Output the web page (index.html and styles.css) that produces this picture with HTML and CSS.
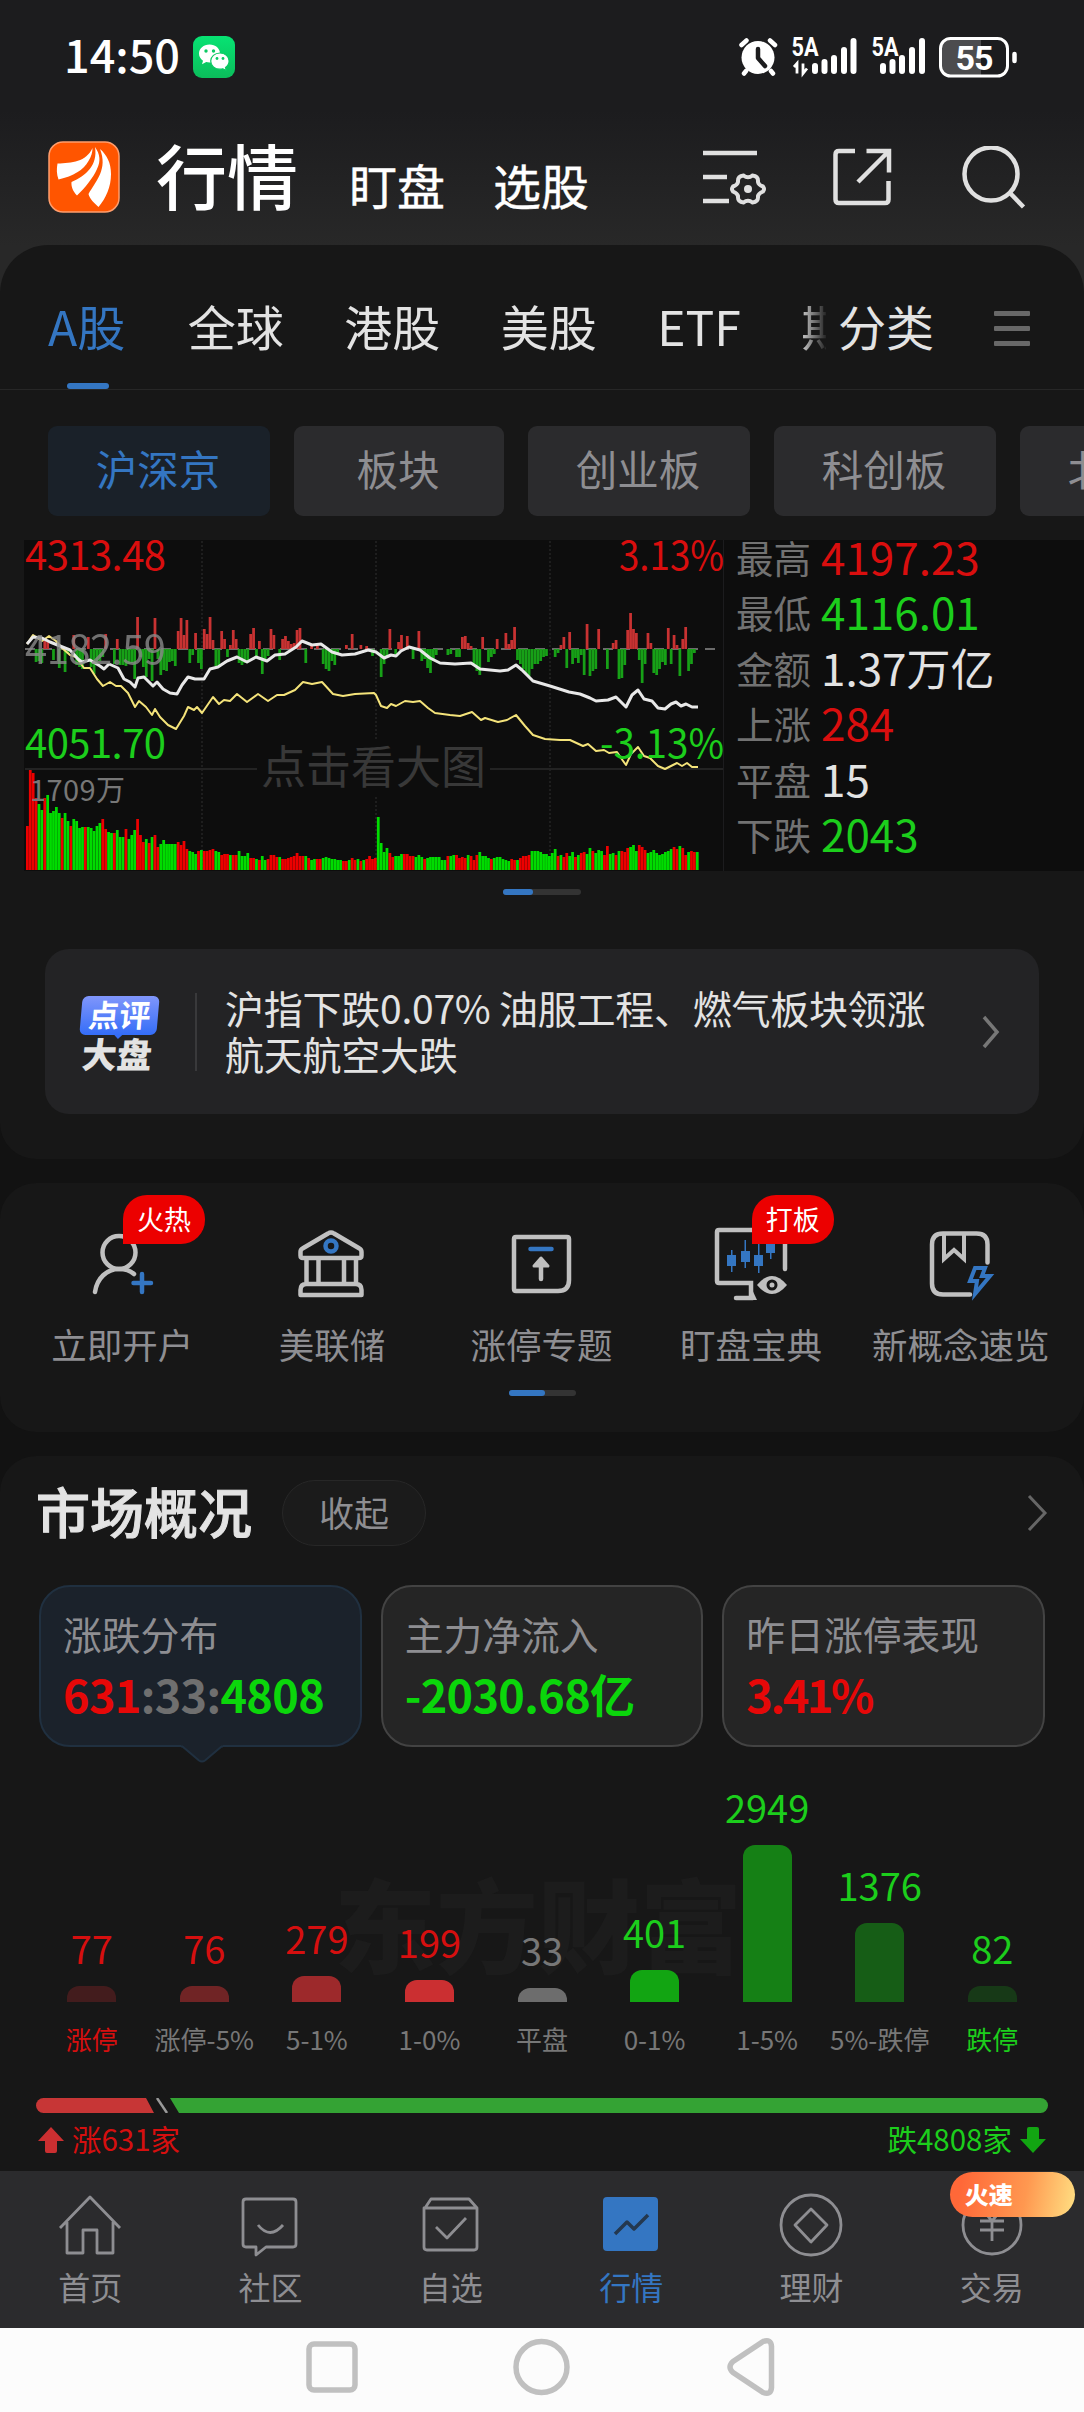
FILE: index.html
```html
<!DOCTYPE html>
<html lang="zh-CN">
<head>
<meta charset="utf-8">
<title>行情</title>
<link rel="stylesheet" href="styles.css">
</head>
<body>
<div class="top">
  <div class="status">
    <span class="clock">14:50</span>
    <svg class="wechat" width="42" height="42" viewBox="0 0 42 42">
      <defs><linearGradient id="wx" x2="0" y2="1"><stop offset="0" stop-color="#07e373"/><stop offset="1" stop-color="#0bbd5b"/></linearGradient></defs>
      <rect width="42" height="42" rx="9" fill="url(#wx)"/>
      <path d="M16.5 8.5C10.500 8.500 6 12.500 6 17.500c0 3 1.500 5.500 4 7.200L9 28.200l4.200-2.200c1.100.3 2.200.4 3.300.4 6 0 10.500-4 10.500-9S22.500 8.500 16.500 8.500z" fill="#fff"/>
      <path d="M27 17c-5.300 0-9.300 3.600-9.300 8.100s4 8.100 9.300 8.100c1 0 2-.1 2.900-.4l3.500 1.700-.9-3c2.200-1.500 3.600-3.800 3.600-6.400 0-4.500-3.800-8.100-9.100-8.100z" fill="#fff" stroke="#0cc963" stroke-width="1.200"/>
      <g fill="#0cc963"><circle cx="13" cy="15" r="1.700"/><circle cx="20.500" cy="15" r="1.700"/><circle cx="24" cy="22.500" r="1.400"/><circle cx="30" cy="22.500" r="1.400"/></g>
    </svg>
    <svg class="signals" width="280" height="42" viewBox="738 36 280 42">
      <g fill="none" stroke="#fff" stroke-width="4.500" stroke-linecap="round">
        <path d="M741.500 45l5-4.500M775 45l-5-4.500M746 71l-2 2.500M771 71l2 2.500"/>
      </g>
      <circle cx="758" cy="57.500" r="16.500" fill="#fff"/>
      <path d="M758 49v9l7 8" fill="none" stroke="#1c1c1e" stroke-width="4.500" stroke-linecap="round" stroke-linejoin="round"/>
      <g fill="#fff" class="net"><text x="791.500" y="55.500" textLength="27" lengthAdjust="spacingAndGlyphs">5A</text><text x="871.500" y="55.500" textLength="27" lengthAdjust="spacingAndGlyphs">5A</text></g>
      <path d="M794 67l3-3.500V73.500M803 63.500V73.500l4-5" fill="none" stroke="#fff" stroke-width="2.800"/>
      <g stroke="#fff" stroke-width="6" stroke-linecap="round">
        <path d="M815 66v5M824.500 62v9M834 58v13M844 50v21M853.500 41v30M883 66v5M892.500 62v9M902 58v13M912 50v21M922 41v30"/>
      </g>
      <path d="M951 39h30v37h-30q-10 0-10-11V50q0-11 10-11z" fill="#4c4c4e"/>
      <rect x="940.500" y="38.500" width="67" height="37.500" rx="10" fill="none" stroke="#fff" stroke-width="3"/>
      <path d="M1014.500 54v7" stroke="#fff" stroke-width="4.500" stroke-linecap="round"/>
      <text class="batt" x="955.500" y="69.500" textLength="38">55</text>
    </svg>
  </div>
  <div class="header">
    <svg class="logo" width="72" height="72" viewBox="0 0 72 72">
      <rect x="1" y="1" width="70" height="70" rx="14" fill="#ff5500" stroke="#ff9d6c" stroke-width="1.500"/>
      <path d="M44.500 7c0 4-1 8-4 13-5 9-15 15-30 18.500-2-5-2-11-1-16C24 22 38 21 44.500 7z" fill="#fff"/>
      <path d="M47 6c5 7 6 14 2 22-4 9-12 19-20 26.500-4-4-6-9-5.500-13.500C38 35 50 24 47 6z" fill="#fff"/>
      <path d="M52 8c7 6 11 14 11 25 0 13-5 24-12.500 33-4-4-9-8-10-13C48 40 60 28 52 8z" fill="#fff"/>
    </svg>
    <h1 class="title">行情</h1>
    <span class="subtitle">盯盘</span>
    <span class="subtitle">选股</span>
    <svg class="tools" width="326" height="64" viewBox="702 146 326 64" fill="none" stroke="#e0e0e0" stroke-width="4.500">
      <path d="M703 153h54M703 177h24M703 201h26"/>
      <path d="M743.500 175.500q4.500 3.500 9 0q6 .5 5.500 6.500q.500 3 5 4.500q2 2.500 0 5q-4.500 2-5 4.500q.500 6-5.500 6.500q-4.500-3.500-9 0q-6-.5-5.500-6.500q-.500-2.500-5-4.500q-2-2.500 0-5q4.500-1.500 5-4.500q-.500-6 5.500-6.500z" stroke-width="4"/>
      <circle cx="748" cy="189" r="4" fill="#e0e0e0" stroke="none"/>
      <path d="M855 151h-16q-3.500 0-3.500 3.500v45q0 3.500 3.500 3.500h46q3.500 0 3.500-3.500V181M866.500 151h22.500v21.500M889 151l-31 31"/>
      <circle cx="991" cy="174" r="26.500"/><path d="M1010 193l13.500 14"/>
    </svg>
  </div>
</div>

<section class="panel first">
  <div class="tabs">
    <div class="tab-scroll">
      <span class="tab active">A股</span><span class="tab">全球</span><span class="tab">港股</span><span class="tab">美股</span><span class="tab">ETF</span><span class="tab">期</span>
    </div>
    <span class="tab classify">分类</span>
    <span class="burger"><i></i><i></i><i></i></span>
  </div>
  <div class="chips">
    <span class="chip on">沪深京</span><span class="chip short">板块</span><span class="chip">创业板</span><span class="chip">科创板</span><span class="chip">北交所</span>
  </div>
  <div class="quote">
    <svg id="chart" width="700" height="331" viewBox="24 540 700 331">
      <g stroke="#252525" stroke-width="1.500" stroke-dasharray="2 2"><path d="M202 541V870M376 541V870M550 541V870"/></g>
      <path d="M25 769H723" stroke="#232323" stroke-width="2"/>
      <path d="M723.500 540V871" stroke="#1c1c1e"/>
      <g id="volume"></g>
      <path d="M25 649H716" stroke="#8b8b8b" stroke-width="1.500" stroke-dasharray="10 7"/>
      <g id="flow"></g>
      <rect x="257" y="740" width="233" height="56" fill="#0d0d0d"/>
      <text class="hint" x="261" y="784" textLength="225">点击看大图</text>
      <polyline fill="none" stroke="#f4e37a" stroke-width="2" stroke-linejoin="round" points="27,644 33,635 42,641 49,636 56,641 62,648 70,655 76,657 84,668 90,668 97,679 103,686 110,682 116,686 121,686 128,693 135,707 139,701 146,707 152,715 155,709 160,717 168,725 176,729 184,716 188,707 194,710 197,707 202,713 213,697 219,704 224,700 230,701 237,694 247,702 258,694 268,701 277,695 284,695 295,690 303,682 312,684 322,682 333,694 343,696 355,694 374,693 376,695 381,706 387,708 391,704 396,706 405,701 413,702 420,701 428,708 435,713 450,715 460,716 472,712 481,720 485,718 498,722 507,720 516,715 525,726 533,735 545,739 560,740 570,740 583,746 588,744 596,751 604,750 609,753 617,752 621,758 626,765 631,754 638,747 644,756 650,758 658,766 665,769 677,763 682,766 687,763 692,767 698,767"/>
      <polyline fill="none" stroke="#e8e8e8" stroke-width="3" stroke-linejoin="round" points="27,644 33,637 42,638 50,642 60,646 70,650 78,659 82,662 90,660 100,666 104,669 109,664 118,668 124,679 130,682 135,687 138,678 144,677 150,683 153,686 157,682 163,689 170,693 177,694 182,685 188,677 195,679 204,679 210,669 218,667 227,661 237,657 247,662 256,657 267,661 275,655 285,654 296,647 302,641 312,645 321,644 332,652 342,655 355,654 368,650 376,652 384,658 391,655 396,656 401,651 409,647 420,650 430,658 440,663 455,664 471,663 480,669 500,671 508,670 516,665 522,670 533,681 550,686 569,692 580,694 590,698 596,701 608,700 616,697 626,707 632,695 638,690 644,699 652,701 658,708 665,709 671,704 676,702 681,706 686,704 692,707 698,707"/>
      <g class="axis">
        <text x="25" y="570" textLength="141" fill="#d90e0e">4313.48</text>
        <text x="25" y="664" textLength="141" fill="#8a8a8a" opacity=".8">4182.59</text>
        <text x="25" y="758" textLength="141" fill="#1cce1c">4051.70</text>
        <text x="619" y="570" textLength="105" lengthAdjust="spacingAndGlyphs" fill="#d90e0e">3.13%</text>
        <text x="600" y="758" textLength="124" lengthAdjust="spacingAndGlyphs" fill="#1cce1c">-3.13%</text>
        <text class="small" x="30" y="801" textLength="95" fill="#777">1709万</text>
      </g>
    </svg>
    <dl class="stats">
      <dt>最高</dt><dd class="up">4197.23</dd>
      <dt>最低</dt><dd class="down">4116.01</dd>
      <dt>金额</dt><dd>1.37万亿</dd>
      <dt>上涨</dt><dd class="up">284</dd>
      <dt>平盘</dt><dd>15</dd>
      <dt>下跌</dt><dd class="down">2043</dd>
    </dl>
  </div>
  <div class="pager wide"><i></i></div>
  <div class="news">
    <div class="news-tag"><b class="review">点评</b><b class="market">大盘</b></div>
    <p>沪指下跌0.07% 油服工程、燃气板块领涨<br>航天航空大跌</p>
    <svg width="20" height="36" viewBox="0 0 20 36"><path d="M3 3l13 15L3 33" fill="none" stroke="#777" stroke-width="3.500"/></svg>
  </div>
</section>

<section class="panel quick">
  <div class="shortcuts">
    <div class="shortcut">
      <svg width="80" height="76" viewBox="82 1226 80 76" fill="none" stroke="#c0c0c0" stroke-width="4.500" stroke-linecap="round"><circle cx="119" cy="1252.500" r="16.500"/><path d="M95 1292c2-14 12-23 24-23 6 0 11 1.500 15 5"/><path d="M142 1274v18M133.500 1283h17.500" stroke="#3476c2"/></svg>
      <span>立即开户</span><em>火热</em>
    </div>
    <div class="shortcut">
      <svg width="80" height="76" viewBox="292 1226 80 76" fill="none" stroke="#c0c0c0" stroke-width="4.500" stroke-linejoin="round"><path d="M329 1233.500q3-2 6 0l25.500 15q2 1 2 3.500v3.500q0 2.500-2.500 2.500h-56q-2.500 0-2.500-2.500V1252q0-2.500 2-3.500zM307.500 1258v26M319.500 1258v26M345 1258v26M357 1258v26M301.500 1295v-5q0-6 6-6h49q6 0 6 6v5z"/><circle cx="332" cy="1246" r="5.500" stroke="#3476c2"/></svg>
      <span>美联储</span>
    </div>
    <div class="shortcut">
      <svg width="80" height="76" viewBox="502 1226 80 76" fill="none" stroke="#c0c0c0" stroke-width="4.500" stroke-linecap="round" stroke-linejoin="round"><path d="M517 1237h51q2 0 2 2v41q0 11-11 11h-42q-2 0-2-2v-50q0-2 2-2z"/><path d="M531.500 1249h21" stroke="#3476c2"/><path d="M542 1279v-19"/><path d="M535 1266l7-8 7 8z" fill="#c0c0c0" stroke-width="3"/></svg>
      <span>涨停专题</span>
    </div>
    <div class="shortcut">
      <svg width="80" height="76" viewBox="711 1226 80 76"><path d="M785 1269v-37q0-2-2-2h-64q-2 0-2 2v49q0 2 2 2h32v15h-15" fill="none" stroke="#c0c0c0" stroke-width="4.500" stroke-linecap="round"/><path d="M749 1283l8 17h-8z" fill="#c0c0c0"/><path d="M757 1285q15-18 30 0q-15 18-30 0z" fill="#c0c0c0"/><circle cx="772" cy="1285" r="4" fill="#c0c0c0" stroke="#171717" stroke-width="3"/><g fill="#3476c2"><path d="M727 1255h9v11h-9zM741 1251h9v11h-9zM754 1255h9v11h-9zM766 1242h9v11h-9z"/><path d="M731 1250h1.500v22H731zM744.500 1240h1.500v28h-1.500zM758 1243h1.500v30H758zM770 1236h1.500v23H770z"/></g></svg>
      <span>盯盘宝典</span><em>打板</em>
    </div>
    <div class="shortcut">
      <svg width="80" height="76" viewBox="921 1226 80 76" fill="none" stroke="#c0c0c0" stroke-width="4.500" stroke-linecap="round"><path d="M971 1294.500h-27q-11 0-11-11v-39q0-11 11-11h33.500q11 0 11 11v18"/><path d="M945 1234v25l10-9 10 9v-25" stroke-width="4"/><path d="M976 1268h10l-3 8h8l-15 18 2-13h-7z" stroke="#3476c2" stroke-width="4"/></svg>
      <span>新概念速览</span>
    </div>
  </div>
  <div class="pager"><i></i></div>
</section>

<section class="panel market-panel">
  <div class="section-head">
    <h2>市场概况</h2><span class="pill">收起</span>
    <svg width="24" height="40" viewBox="0 0 24 40"><path d="M3 3l16 17L3 37" fill="none" stroke="#666" stroke-width="3"/></svg>
  </div>
  <div class="cards">
    <div class="card selected"><span>涨跌分布</span><b><i class="r">631</i><i class="n">:33:</i><i class="g">4808</i></b>
      <svg class="pointer" width="42" height="18" viewBox="0 0 42 18"><path d="M0 0h42v2h-1L24 16q-3 2-6 0L1 2H0z" fill="#1b222b"/><path d="M0 1.500h1.500L18 15.500q3 2 6 0L40.500 1.500H42" fill="none" stroke="#203040" stroke-width="2"/></svg>
    </div>
    <div class="card"><span>主力净流入</span><b class="g">-2030.68亿</b></div>
    <div class="card"><span>昨日涨停表现</span><b class="r rate">3.41%</b></div>
  </div>
  <div class="dist">
    <div class="watermark">东方财富</div>
    <div class="col red"><b>77</b><i style="height:16px;background:#431c1d"></i><span>涨停</span></div>
    <div class="col red"><b>76</b><i style="height:16px;background:#702425"></i><span class="dim">涨停-5%</span></div>
    <div class="col red"><b>279</b><i style="height:26px;background:#9d292b"></i><span class="dim">5-1%</span></div>
    <div class="col red"><b>199</b><i style="height:22px;background:#cb2f31"></i><span class="dim">1-0%</span></div>
    <div class="col flat"><b>33</b><i style="height:14px;background:#6d6d6d"></i><span class="dim">平盘</span></div>
    <div class="col green"><b>401</b><i style="height:32px;background:#12a512"></i><span class="dim">0-1%</span></div>
    <div class="col green"><b>2949</b><i style="height:157px;background:#158015"></i><span class="dim">1-5%</span></div>
    <div class="col green"><b>1376</b><i style="height:79px;background:#165d16"></i><span class="dim">5%-跌停</span></div>
    <div class="col green"><b>82</b><i style="height:16px;background:#173917"></i><span>跌停</span></div>
  </div>
  <svg class="ratio" width="1012" height="15" viewBox="0 0 1012 15">
    <path d="M7.500 0H110l8 15H7.500a7.500 7.500 0 010-15z" fill="#c73636"/><path d="M121 0l10 15" stroke="#999" stroke-width="2.500"/><path d="M134 0h870.500a7.500 7.500 0 010 15H143z" fill="#34a334"/>
  </svg>
  <div class="totals">
    <svg width="26" height="26" viewBox="0 0 26 26"><path d="M13 0l13 14h-7v10q0 2-2 2H9q-2 0-2-2V14H0z" fill="#cb2f31"/></svg><span class="r">涨631家</span>
    <span class="g push">跌4808家</span><svg width="26" height="26" viewBox="0 0 26 26"><path d="M13 26L0 12h7V2q0-2 2-2h8q2 0 2 2v10h7z" fill="#12a512"/></svg>
  </div>
</section>

<nav class="nav">
  <a><svg viewBox="0 0 66 66"><path d="M3 36L33 5l30 31M10 30v31h16V38h14v23h16V30"/></svg><span>首页</span></a>
  <a><svg viewBox="0 0 66 66"><path d="M9 7h47q3 0 3 3v42q0 3-3 3H29l-10 8v-8H9q-3 0-3-3V10q0-3 3-3zM21 33q12 15 25 0"/></svg><span>社区</span></a>
  <a><svg viewBox="0 0 66 66"><path d="M7 16l6-9h38l8 9v39q0 3-3 3H9q-3 0-3-3V16h53M18 35l11 11 19-20"/></svg><span>自选</span></a>
  <a class="current"><svg viewBox="0 0 66 66"><rect x="5" y="5" width="55" height="54" rx="4" fill="#3476c2" stroke="none"/><path d="M17 42l12-12 7 7 14-14" stroke="#24384f" stroke-width="3.500"/></svg><span>行情</span></a>
  <a><svg viewBox="0 0 66 66"><circle cx="33" cy="33" r="30"/><path d="M33 17l16 16-16 17-16-17z"/></svg><span>理财</span></a>
  <a><svg viewBox="0 0 66 66"><circle cx="33" cy="33" r="29"/><path d="M24 18l9 11 9-11M21 29h24M21 38h24M33 29v20"/></svg><span>交易</span><em>火速</em></a>
</nav>
<div class="sysbar">
  <svg width="472" height="60" viewBox="305 2337 472 60" fill="none" stroke="#c0c0c0" stroke-width="5.500" stroke-linejoin="round"><rect x="309" y="2344" width="46" height="46" rx="5"/><circle cx="541.500" cy="2367" r="25.500"/><path d="M763 2341.500l-30 20q-6 5.500 0 11l30 20q8 3 8.500-5v-41q-.500-8-8.500-5z"/></svg>
</div>
<script src="chart.js"></script>
</body>
</html>
```
FILE: styles.css
```css
* { box-sizing: border-box; margin: 0; padding: 0; }
body {
  width: 1084px;
  height: 2412px;
  overflow: hidden;
  background: #121212;
  color: #e3e3e3;
  font-family: "Noto Sans CJK SC", "Noto Sans", sans-serif;
}
svg { display: block; flex: none; }
i, em { font-style: normal; }
.top { height: 293px; margin-bottom: -48px; background: linear-gradient(#1c1c1e 110px, #282828 245px); }
.status { display: flex; align-items: center; height: 114px; padding: 0 66px 0 64px; }
.clock { font-size: 45px; line-height: 45px; font-weight: 500; color: #fff; width: 129px; margin-top: -8px; }
.signals { margin-left: auto; }
.net text { font: bold 25px Roboto, sans-serif; }
.batt { font: 700 34px Roboto, sans-serif; fill: #fff; }
.header { display: flex; align-items: flex-start; padding: 0 56px 0 48px; height: 131px; color: #fff; }
.logo { margin-top: 27px; }
.title { font-size: 71px; line-height: 70px; font-weight: 500; margin: 24px 51px 0 36px; }
.subtitle { font-size: 48px; line-height: 47px; font-weight: 400; margin: 47px 48px 0 0; -webkit-text-stroke: 0.400px #fff; }
.tools { margin: 32px 0 0 auto; }

.panel { background: #171717; border-radius: 36px; margin-bottom: 24px; }
.first { height: 914px; border-radius: 48px 48px 36px 36px; position: relative; }
.tabs { display: flex; height: 145px; padding-top: 57px; border-bottom: 1px solid #272727; }
.tab-scroll {
  display: flex; gap: 60.500px; width: 826px; padding-left: 48px; overflow: hidden;
  -webkit-mask-image: linear-gradient(90deg, #000 798px, transparent 828px);
  mask-image: linear-gradient(90deg, #000 798px, transparent 828px);
}
.tab { font-size: 48px; line-height: 47px; white-space: nowrap; flex: none; }
.active { color: #3476c2; height: 87px; margin-right: 2px; position: relative; }
.active::after { content: ""; position: absolute; left: 19px; bottom: 0; width: 42px; height: 6px; border-radius: 3px; background: #3476c2; }
.classify { width: 96px; margin: 0 60px 0 12px; }
.burger { display: flex; flex-direction: column; gap: 10px; padding-top: 9px; }
.burger i { width: 36px; height: 5px; border-radius: 1px; background: #686868; }
.chips { display: flex; gap: 24px; padding: 36px 0 24px 48px; overflow: hidden; }
.chip { flex: none; width: 222px; height: 90px; border-radius: 9px; background: #2b2b2d; color: #8e8e92; text-align: center; font-size: 41.500px; line-height: 85px; padding-right: 2px; }
.chip.short { width: 210px; }
.chip.on { background: #1a2129; color: #3476c2; }
.quote { display: flex; height: 331px; margin-left: 24px; background: #0d0d0d; }
.axis text { font-size: 40px; }
.axis .small { font-size: 29px; }
.hint { font-size: 45px; fill: #383838; }
.stats { display: grid; grid-template-columns: 76px 1fr; grid-auto-rows: 55.400px; column-gap: 9px; padding-left: 12px; height: 331px; width: 360px; margin-top: -6px; }
.stats dt { font-size: 37.500px; line-height: 45px; color: #727272; }
.stats dd { font-size: 44px; line-height: 45px; white-space: nowrap; }
.stats .up { color: #d90e0e; }
.stats .down { color: #1cce1c; }
.pager { width: 67px; height: 6px; border-radius: 3px; background: #333; margin: 27px auto 0; }
.pager i { display: block; width: 36px; height: 6px; border-radius: 3px; background: #3476c2; }
.pager.wide { width: 78px; margin-top: 18px; }
.pager.wide i { width: 30px; }
.news { display: flex; align-items: center; height: 165px; margin: 54px 45px 0; padding: 0 38px 0 34px; border-radius: 24px; background: #232325; }
.news-tag { width: 118px; height: 78px; padding-top: 3px; border-right: 2px solid #39393b; }
.news-tag b { display: block; line-height: 36px; transform: skewX(-5deg); }
.review { width: 77px; height: 39px; margin-left: 2px; border-radius: 6px; background: linear-gradient(#8096fb, #346df8); color: #fff; font-size: 31px; text-align: center; position: relative; }
.review::after { content: ""; position: absolute; left: 34px; top: 38px; border: 5px solid transparent; border-top-color: #346df8; }
.news-tag .market { margin: 0 0 0 3px; font-size: 35px; line-height: 35px; font-weight: 900; }
.news p { font-size: 39px; line-height: 46px; margin: -4px 0 0 28px; flex: 1; white-space: nowrap; letter-spacing: -0.250px; }

.quick { height: 249px; padding-top: 43px; }
.shortcuts { display: flex; margin: 0 18px 0 17px; }
.shortcut { position: relative; display: flex; flex-direction: column; align-items: center; width: 209.600px; color: #8e8e92; font-size: 35.500px; line-height: 50px; padding-bottom: 5px; white-space: nowrap; }
.shortcut span { margin: 17px 0 0 1px; }
.shortcut em { position: absolute; left: 106px; top: -31px; width: 82px; height: 49px; border-radius: 24px 24px 24px 0; background: #ec0000; color: #fff; font-size: 27px; line-height: 48px; text-align: center; }
.quick .pager { margin-top: 16px; }

.market-panel { height: 751px; margin: 0; }
.section-head { display: flex; align-items: center; padding: 24px 34px 0 36px; }
.section-head h2 { font-size: 54px; line-height: 60px; font-weight: 500; margin-top: -5px; -webkit-text-stroke: 1px #e3e3e3; }
.pill { width: 144px; height: 66px; margin-left: 30px; border: 1px solid #272727; border-radius: 33px; background: #1b1b1b; color: #8e8e92; text-align: center; font-size: 35px; line-height: 61px; }
.section-head svg { margin-left: auto; }
.cards { display: flex; gap: 19px; padding: 39px 39px 0; }
.card { position: relative; flex: 1; height: 162px; padding: 22px 0 0 22px; border: 2px solid #434343; border-radius: 31px; background: #252525; color: #8e8e92; }
.card.selected { background: #1b222b; border-color: #203040; }
.card span { display: block; font-size: 38.800px; line-height: 48px; }
.card b { display: block; font-size: 45px; line-height: 50px; margin-top: 12px; letter-spacing: -0.650px; white-space: nowrap; }
.card b i { font-weight: 700; }
.card .rate { letter-spacing: -2.400px; }
.pointer { position: absolute; left: 140px; top: 158px; }
.r { color: #e60808; }
.g { color: #0bd60b; }
.n { color: #6f6f6f; }
.dist { position: relative; display: flex; justify-content: space-between; height: 311px; padding: 0 35.500px; }
.watermark { position: absolute; left: 334px; top: 115px; font-size: 102px; line-height: 120px; font-weight: 900; color: #1c1c1c; }
.col { position: relative; display: flex; flex-direction: column; justify-content: flex-end; align-items: center; width: 112.500px; flex: none; white-space: nowrap; }
.col b { font-size: 38px; line-height: 40px; font-weight: 400; margin-bottom: 18px; }
.col i { width: 49px; border-radius: 12px 12px 0 0; }
.col span { font-size: 26px; line-height: 30px; margin: 22px 0 4px; }
.red { color: #d60f0f; }
.green { color: #1cce1c; }
.flat, .col .dim { color: #777; }
.ratio { margin: 40px 0 0 36px; }
.totals { display: flex; align-items: center; padding: 9px 38px 0; font-size: 29.500px; line-height: 38px; }
.totals span { margin: -3px 8px 0; }
.totals .push { margin-left: auto; }
.totals .r { color: #d60f0f; }
.totals .g { color: #1cce1c; }

.nav { position: relative; display: flex; height: 157px; margin-top: -36px; padding-right: 2px; background: #2b2b2d; }
.nav a { position: relative; flex: 1; display: flex; flex-direction: column; align-items: center; padding-top: 21px; color: #8e8e92; font-size: 32px; line-height: 44px; }
.nav svg { width: 66px; height: 66px; fill: none; stroke: #8e8e92; stroke-width: 2.800; stroke-linejoin: round; }
.nav span { margin-top: 6px; }
.nav .current { color: #3476c2; }
.nav em { position: absolute; left: 48px; top: 1px; width: 125px; height: 45px; padding-left: 15px; border-radius: 23px; background: linear-gradient(100deg, #ff6838 10%, #ff9850 60%, #ffe083); color: #fff; font-size: 24px; line-height: 43px; font-weight: 900; }
.sysbar { height: 84px; padding: 9px 0 0 305px; background: #fcfcfc; }
```
FILE: chart.js
```js
// One bar per trading minute, 2.9px apart, starting at 9:30.
const STEP = 2.9, X0 = 26;
const heights = [44,100,97,72,66,60,72,75,57,59,63,57,52,57,49,44,51,49,42,43,43,43,42,39,44,47,51,41,38,37,37,40,33,33,41,31,35,40,51,35,28,31,27,33,35,23,26,30,26,26,26,26,28,25,29,21,19,18,16,19,20,19,19,20,21,19,18,15,16,16,15,15,15,19,14,14,17,12,12,11,10,14,10,11,15,15,13,13,11,11,12,13,14,17,14,14,14,12,10,11,11,11,12,13,12,11,11,10,10,9,9,10,12,10,11,9,10,11,14,11,12,53,27,18,22,17,13,14,14,16,16,16,14,14,13,15,13,11,12,13,13,13,13,10,10,14,14,15,15,12,13,12,15,14,10,15,18,14,14,12,11,12,13,13,11,10,9,11,10,10,12,14,14,15,19,19,19,18,16,16,14,17,21,14,15,13,17,14,18,13,15,17,18,16,22,19,17,20,19,15,24,16,17,15,19,19,18,22,23,25,19,25,23,20,17,18,20,17,15,16,18,19,21,23,21,24,22,15,18,19,18,18,21,19,21,15];
const colors =
  "rrrrggrgggggrgg" + "rggggrgggggrrgg" + "rgggrgggrrrgrgr" + "rggggggrrrrgggr" +
  "grrrrggrrrgrrgg" + "ggrrgrggrrrrgrr" + "rrrrrrgrggrrggg" + "ggggrrgrrgrgrrr" +
  "rggggrrgggrrrrg" + "ggrgggggggrggrr" + "rrgrrrggggrgggg" + "ggrrgrrrrgggggg" +
  "gggrgrrggrgrrgg" + "rgggrrggrgrrrgg" + "grrrgggggggggrr" + "grrgrrgr";
const flow = [[3,-13],[4,-12],[5,-14],[6,8],[7,7],[9,-11],[11,-19],[13,-23],[14,-5],[16,14],[17,-16],[18,-18],[19,-20],[21,12],[22,-18],[23,-25],[24,-16],[25,-12],[26,-8],[27,15],[30,-15],[31,10],[32,-16],[33,-16],[34,-17],[35,-15],[36,-14],[37,-30],[38,32],[39,-8],[40,-18],[41,-28],[42,-10],[43,-32],[44,31],[45,-10],[46,-26],[47,-21],[48,-22],[49,-13],[50,-12],[51,-17],[52,18],[53,31],[54,14],[55,29],[56,-14],[57,-6],[58,16],[59,-14],[60,-20],[61,20],[62,15],[63,32],[64,9],[65,-17],[66,-17],[67,18],[68,10],[69,-8],[70,4],[71,19],[72,10],[73,-14],[74,-16],[75,-14],[76,-13],[77,15],[78,21],[79,-8],[80,8],[81,-25],[82,-10],[83,-7],[84,20],[85,14],[87,-11],[88,10],[89,13],[90,8],[91,5],[92,6],[93,19],[94,21],[96,-14],[98,3],[100,4],[102,-15],[103,-20],[104,-22],[105,-12],[106,-16],[107,-6],[110,4],[112,15],[115,4],[117,3],[119,-7],[122,-28],[123,-15],[124,-8],[125,20],[127,-5],[128,7],[129,14],[131,13],[133,-10],[135,18],[136,-12],[137,-10],[138,-19],[139,-24],[140,-12],[141,-6],[145,-6],[146,-5],[148,-8],[149,-8],[150,12],[151,13],[152,6],[153,3],[154,-15],[155,-22],[156,-26],[157,12],[159,-13],[160,-8],[161,-5],[162,10],[165,16],[166,5],[167,9],[168,22],[169,-11],[170,-15],[171,-20],[172,-24],[173,-27],[174,-20],[175,-15],[176,-15],[177,-12],[178,-8],[179,-7],[182,-8],[183,-4],[184,4],[185,12],[186,-19],[187,17],[188,-15],[189,-9],[190,-14],[191,-6],[192,-26],[193,25],[194,-27],[195,-22],[196,-20],[197,20],[200,-20],[202,6],[203,9],[204,-30],[205,-29],[206,-16],[207,19],[208,36],[209,20],[210,16],[211,-11],[212,-34],[213,-15],[214,16],[215,6],[216,-24],[217,-26],[218,-20],[219,-13],[220,-16],[221,21],[222,-15],[223,14],[224,4],[225,-27],[226,10],[227,22],[228,-22],[229,-15],[230,-4]];
const bar = (parent, i, y, h, fill) => {
  const r = document.createElementNS("http://www.w3.org/2000/svg", "rect");
  r.setAttribute("x", X0 + i * STEP);
  r.setAttribute("y", y);
  r.setAttribute("width", 2.75);
  r.setAttribute("height", h);
  r.setAttribute("fill", fill);
  parent.appendChild(r);
};
const volume = document.getElementById("volume");
heights.slice(0, 232).forEach((h, i) => bar(volume, i, 870 - h, h, colors[i] === "r" ? "#ed0000" : "#00dc00"));
const flowGroup = document.getElementById("flow");
flow.forEach(([i, v]) => bar(flowGroup, i, v > 0 ? 649 - v : 649, Math.abs(v), v > 0 ? "#c83232" : "#17a017"));
```
